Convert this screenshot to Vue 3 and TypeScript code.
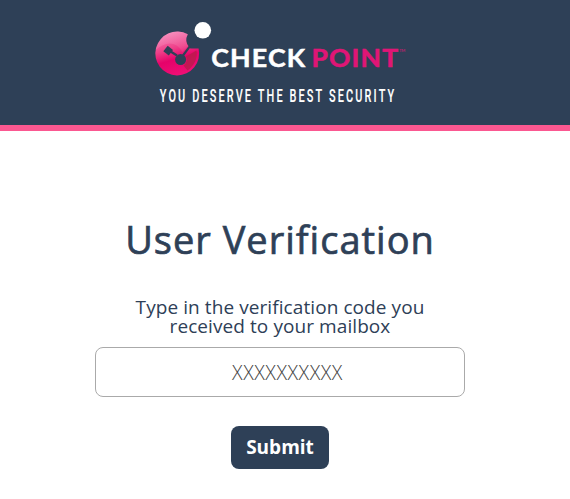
<script setup lang="ts">
import { ref } from 'vue'

const code = ref('')
</script>

<template>
  <div class="page">
    <header class="header">
      <svg class="brand" width="260" height="90" viewBox="150 15 260 90" role="img" aria-label="Check Point">
        <defs>
          <linearGradient id="disc" x1="0.3" y1="0" x2="0.6" y2="1">
            <stop offset="0" stop-color="#f77fb5" />
            <stop offset="0.38" stop-color="#ee3f88" />
            <stop offset="0.62" stop-color="#e6026a" />
            <stop offset="1" stop-color="#f00f76" />
          </linearGradient>
          <linearGradient id="shine" x1="0" y1="0" x2="0.7" y2="1">
            <stop offset="0" stop-color="#fff" stop-opacity="0.16" />
            <stop offset="1" stop-color="#fff" stop-opacity="0.08" />
          </linearGradient>
        </defs>
        <path d="M187.8 34.3A21.9 21.9 0 1 0 198.6 48.6L190.4 48.6L188.9 46.8A11.5 11.5 0 0 1 187.8 34.3Z" fill="url(#disc)" />
        <path d="M155.5 50A22 22 0 0 1 187.8 34.3A11 11 0 0 0 188 46L182.4 52C176 41 166 41 155.5 50Z" fill="url(#shine)" />
        <path class="shade" d="M196.5 50.5C198 58 194 66 187.5 70.5L183.5 65.5C187 63 187.5 59 185.8 56.5Z" />
        <path class="link" d="M169 50.5L177 55.5M183 55.5L189.8 46.4" />
        <path class="node" d="M167.7 45.8L173 50L168.8 55.4L163.3 51.2Z" />
        <circle class="node" cx="180.6" cy="59.6" r="5.5" />
        <circle cx="202.8" cy="30.3" r="8.3" fill="#fff" />
        <text class="name" transform="translate(211.2 67.3) scale(1.05 1)" textLength="89.4">CHECK</text>
        <text class="name point" transform="translate(311.4 67.3) scale(1.04 1)" textLength="83.4">POINT</text>
        <text class="tm" x="399.2" y="52">TM</text>
        <text class="tagline" transform="translate(159.8 102) scale(0.62 1)" textLength="378">YOU DESERVE THE BEST SECURITY</text>
      </svg>
    </header>
    <main class="content">
      <h1>User Verification</h1>
      <form class="form" @submit.prevent>
        <label for="code">Type in the verification code you<br />received to your mailbox</label>
        <input id="code" v-model="code" type="text" placeholder="XXXXXXXXXX" />
        <button type="submit">Submit</button>
      </form>
    </main>
  </div>
</template>

<style>
body {
  background: #fff;
}
</style>

<style scoped>
.page {
  height: 499px;
  overflow: hidden;
  font-family: 'Open Sans', 'Noto Sans', sans-serif;
  color: #2e4057;
}
.header {
  box-sizing: border-box;
  height: 131px;
  padding: 15px 0 0 150px;
  background: #2e4057;
  border-bottom: 6px solid #fb5891;
}
.brand {
  display: block;
  overflow: visible;
}
.shade {
  fill: #b91c4b;
  opacity: 0.8;
}
.link {
  fill: none;
  stroke: #2e4057;
  stroke-width: 2.2;
}
.node {
  fill: #2e4057;
}
.name {
  font: 700 25.5px Lato, sans-serif;
  fill: #fff;
  stroke: #fff;
  stroke-width: 0.5px;
}
.point {
  fill: #e01576;
  stroke: #e01576;
}
.tm {
  font: 4px Lato, sans-serif;
  fill: #e01576;
}
.tagline {
  font: 500 17.6px Roboto, sans-serif;
  fill: #fff;
  stroke: #fff;
  stroke-width: 0.15px;
}
.content {
  display: flex;
  flex-direction: column;
  align-items: center;
  padding: 82px 10px 0 0;
}
h1 {
  margin: 0;
  font-size: 38px;
  font-weight: 500;
  line-height: 52px;
  letter-spacing: 1px;
  -webkit-text-stroke: 0.7px #2e4057;
}
.form {
  display: flex;
  flex-direction: column;
  align-items: center;
  margin-top: 33px;
}
label {
  font-size: 19px;
  line-height: 19px;
  letter-spacing: 0.08px;
  text-align: center;
}
input {
  box-sizing: border-box;
  width: 370px;
  height: 50px;
  margin: 11px 0 0;
  padding: 0 0 0 15px;
  border: 1px solid #aaa;
  border-radius: 8px;
  background: #fff;
  font: 300 19.6px 'Open Sans', sans-serif;
  letter-spacing: 0.55px;
  text-align: center;
  outline: none;
}
input::placeholder {
  color: #444;
}
button {
  width: 98px;
  height: 43px;
  margin-top: 29px;
  padding: 0 0 2px;
  border: 0;
  border-radius: 8px;
  background: #2e4057;
  color: #fff;
  font: 700 19px 'Open Sans', sans-serif;
}
</style>
